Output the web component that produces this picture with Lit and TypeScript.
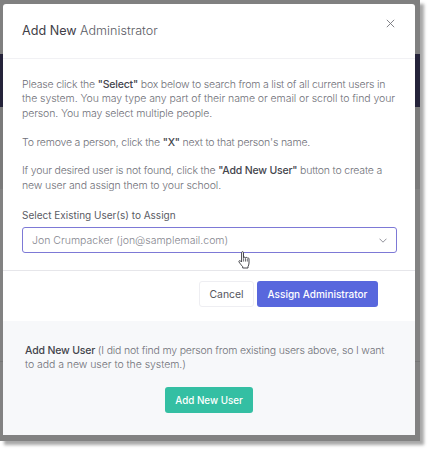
import { LitElement, html, css } from "lit";
import { customElement } from "lit/decorators.js";

@customElement("app-root")
export class AppRoot extends LitElement {
  static styles = css`
    :host {
      display: block;
      width: 431px;
      height: 452px;
      overflow: hidden;
      background: #fff;
      font-family: Inter, "Liberation Sans", sans-serif;
      font-weight: 300;
      color: #6f7078;
    }
    .stage {
      box-sizing: border-box;
      width: 420px;
      height: 441px;
      padding: 4px 5px 6px 3px;
      background: linear-gradient(
        #808080 54px,
        #25233a 54px,
        #25233a 107px,
        #7a7a7a 107px,
        #7a7a7a 189px,
        #828282 189px,
        #828282 361px,
        #767676 361px,
        #767676 362px,
        #828282 362px
      );
      box-shadow: 4px 4px 3px #a8a8a8;
      position: relative;
    }
    .modal {
      height: 431px;
      background: #fff;
      border-radius: 3px 3px 0 0;
      display: flex;
      flex-direction: column;
    }
    .head {
      box-sizing: border-box;
      height: 55px;
      padding: 19px 19px 0;
      border-bottom: 1px solid #f1f1f4;
      display: flex;
      justify-content: space-between;
      align-items: flex-start;
    }
    .title {
      font-size: 12.6px;
      line-height: 16px;
      color: #5a5b64;
      font-weight: 300;
    }
    .title b {
      font-weight: 400;
      color: #3f4048;
    }
    .close {
      width: 9px;
      height: 9px;
      margin: -4px 1px 0 0;
      display: block;
    }
    .body {
      padding: 19px 19px 0;
      height: 212px;
      box-sizing: border-box;
      border-bottom: 1px solid #e6e6ea;
    }
    .para {
      margin: 0 0 14.4px;
      font-size: 10.5px;
      line-height: 14.4px;
    }
    .ln {
      display: block;
      white-space: nowrap;
    }
    .ln1 {
      letter-spacing: -0.19px;
    }
    .ln2 {
      letter-spacing: -0.07px;
    }
    .ln3 {
      letter-spacing: -0.125px;
    }
    .ln4 {
      letter-spacing: -0.2px;
    }
    .ln5 {
      letter-spacing: -0.19px;
    }
    .ln6 {
      letter-spacing: -0.115px;
    }
    .ln7 {
      letter-spacing: -0.18px;
    }
    .ln8 {
      letter-spacing: -0.05px;
    }
    .para b {
      font-weight: 500;
      color: #44454d;
    }
    .label {
      font-size: 10px;
      line-height: 14px;
      font-weight: 400;
      color: #5a5b64;
      margin: 13px 0 5.4px;
    }
    .select {
      box-sizing: border-box;
      width: 375px;
      height: 26px;
      padding: 0 9px;
      border: 1px solid #7d79d6;
      border-radius: 3px;
      display: flex;
      align-items: center;
      justify-content: space-between;
      font-size: 10.5px;
      color: #85868e;
    }
    .chev {
      width: 8px;
      height: 5px;
      display: block;
    }
    .foot {
      height: 50px;
      box-sizing: border-box;
      padding: 10px 37px 0 0;
      display: flex;
      justify-content: flex-end;
      gap: 3px;
      align-items: flex-start;
    }
    .btn {
      box-sizing: border-box;
      height: 26px;
      border-radius: 3px;
      display: flex;
      align-items: center;
      justify-content: center;
      font-size: 10px;
      font-weight: 500;
    }
    .cancel {
      width: 55px;
      border: 1px solid #eeeef2;
      color: #54555e;
      font-weight: 400;
      font-size: 10.4px;
    }
    .assign {
      width: 121px;
      background: #5867dd;
      color: #fff;
    }
    .extra {
      flex: 1;
      background: #f7f8fa;
      padding: 23px 22px 0;
    }
    .extra .para {
      margin: 0 0 15px;
      line-height: 14px;
    }
    .add {
      width: 88px;
      margin: 0 auto;
      background: #34bfa3;
      color: #fff;
      font-size: 9.8px;
    }
    .hand {
      position: absolute;
      left: 237px;
      top: 251px;
      width: 15px;
      height: 20px;
    }
  `;

  render() {
    return html`
      <div class="stage">
        <div class="modal">
          <div class="head">
            <div class="title"><b>Add New</b> Administrator</div>
            <svg class="close" viewBox="0 0 9 9" fill="none" stroke="#74757c" stroke-width="0.9">
              <path d="M.8.8l7.4 7.4M8.2.8L.8 8.2" />
            </svg>
          </div>
          <div class="body">
            <p class="para">
              <span class="ln ln1">Please click the <b>"Select"</b> box below to search from a list of all current users in</span>
              <span class="ln ln2">the system. You may type any part of their name or email or scroll to find your</span>
              <span class="ln ln3">person. You may select multiple people.</span>
            </p>
            <p class="para">
              <span class="ln ln4">To remove a person, click the <b>"X"</b> next to that person's name.</span>
            </p>
            <p class="para">
              <span class="ln ln5">If your desired user is not found, click the <b>"Add New User"</b> button to create a</span>
              <span class="ln ln6">new user and assign them to your school.</span>
            </p>
            <div class="label">Select Existing User(s) to Assign</div>
            <div class="select">
              <span>Jon Crumpacker (jon@samplemail.com)</span>
              <svg class="chev" viewBox="0 0 8 5" fill="none" stroke="#85868e" stroke-width="0.9">
                <path d="M.5.7L4 4.2 7.5.7" />
              </svg>
            </div>
          </div>
          <div class="foot">
            <div class="btn cancel">Cancel</div>
            <div class="btn assign">Assign Administrator</div>
          </div>
          <div class="extra">
            <p class="para">
              <span class="ln ln7"><b>Add New User</b> (I did not find my person from existing users above, so I want</span>
              <span class="ln ln8">to add a new user to the system.)</span>
            </p>
            <div class="btn add">Add New User</div>
          </div>
        </div>
        <svg class="hand" viewBox="0 0 15 20" fill="#fff" stroke="#33343a" stroke-width="0.9" stroke-linejoin="round">
          <path d="M4.6 1.6c0-1.2 1.9-1.2 1.9 0v5.2c.3-.9 1.8-.9 1.9.1.3-.8 1.7-.7 1.9.3.4-.6 1.6-.4 1.7.6v4.2c0 1.6-.5 2.6-1 3.6v1.4H5.7v-1.3c-1-1-2.5-3-3.6-4.6-.7-1 .5-2 1.4-1.2l1.1 1.1z" />
          <path d="M6.6 7.2v3.4M8.5 7.2v3.4M10.3 8v2.6" fill="none" stroke-width="0.7" />
        </svg>
      </div>
    `;
  }
}
